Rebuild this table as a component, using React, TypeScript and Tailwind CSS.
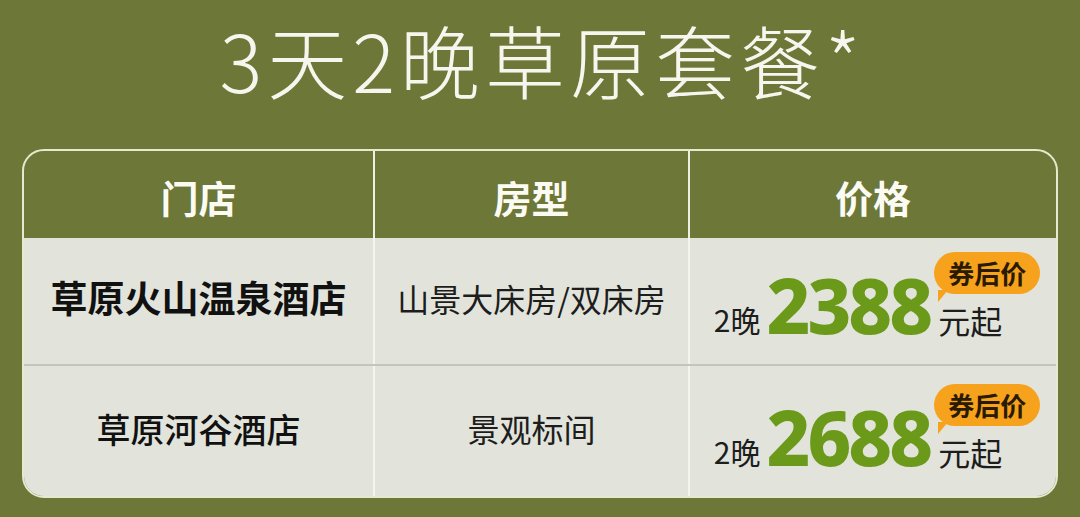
const cjk = "font-['Noto_Sans_CJK_SC',sans-serif]";

const rows = [
  { store: "草原火山温泉酒店", storeClass: "text-[37px] font-semibold", room: "山景大床房/双床房", price: "2388", h: "h-[126px]" },
  { store: "草原河谷酒店", storeClass: "text-[34px] font-medium", room: "景观标间", price: "2688", h: "h-[132px]" },
];

function Price({ value }: { value: string }) {
  return (
    <div className="flex items-end justify-center pb-[28px] pl-[8px]">
      <span className="mb-[2px] text-[30px] leading-none text-[#1d1d1d]">2晚</span>
      <span className="ml-[6px] font-['Noto_Sans',sans-serif] text-[76px] leading-[0.8] font-extrabold tracking-[-3px] text-[#6b9a1a]">
        {value}
      </span>
      <div className="ml-[8px] flex flex-col items-start">
        <div className="relative -mb-[12px] -ml-[4px] rounded-full bg-[#f6a21d] px-[14px] py-[4px] text-[26px] leading-[34px] font-bold text-[#2a1a00]">
          券后价
          <span className="absolute bottom-[-8px] left-[4px] h-0 w-0 border-t-[12px] border-r-[10px] border-t-[#f6a21d] border-r-transparent" />
        </div>
        <span className="mt-[22px] text-[32px] leading-none text-[#1d1d1d]">元起</span>
      </div>
    </div>
  );
}

export default function App() {
  return (
    <div className={`h-[517px] w-[1080px] overflow-hidden bg-[#6c7738] ${cjk}`}>
      <div className="flex h-[149px] items-start justify-center">
        <h1 className="pl-[5px] text-center text-[80px] leading-[116px] font-light tracking-[5px] text-[#f7f6ee]">
          3天2晚草原套餐*
        </h1>
      </div>
      <div className="mx-[22px] overflow-hidden rounded-[22px] border-2 border-[#e6e9cf]">
        <div className="grid h-[87px] grid-cols-[349px_315px_1fr] text-[38px] font-bold text-[#fbfbf4]">
          <div className="flex items-center justify-center pt-[4px]">门店</div>
          <div className="flex items-center justify-center border-l-2 border-[#eef0e2] pt-[4px]">房型</div>
          <div className="flex items-center justify-center border-l-2 border-[#eef0e2] pt-[4px]">价格</div>
        </div>
        {rows.map((r, i) => (
          <div
            key={r.price}
            className={`grid grid-cols-[349px_315px_1fr] bg-[#e2e4db] ${r.h} ${i > 0 ? "border-t-2 border-[#c3c5bb]" : ""}`}
          >
            <div className={`flex items-center justify-center pb-[6px] text-[#111] ${r.storeClass}`}>{r.store}</div>
            <div className="flex items-center justify-center border-l-2 border-[#f4f5ee] pb-[6px] text-[32px] text-[#1d1d1d]">
              {r.room}
            </div>
            <div className="flex items-end justify-center border-l-2 border-[#f4f5ee]">
              <Price value={r.price} />
            </div>
          </div>
        ))}
      </div>
    </div>
  );
}
